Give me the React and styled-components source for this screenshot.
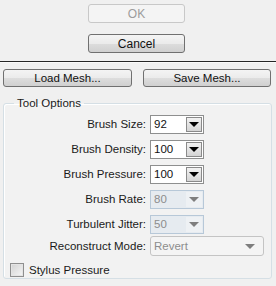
import React from "react";
import styled, { createGlobalStyle } from "styled-components";

const GlobalStyle = createGlobalStyle`
  html, body {
    margin: 0;
    padding: 0;
    background: #f0f0f0;
  }
  body {
    font-family: "Liberation Sans", Arial, sans-serif;
    font-size: 11px;
    color: #1a1a1a;
  }
`;

const Page = styled.div`
  width: 276px;
  height: 286px;
  overflow: hidden;
  background: #f0f0f0;
`;

const Top = styled.div`
  display: flex;
  flex-direction: column;
  padding: 4px 0 0 88px;
  gap: 11px;
`;

const Button = styled.div`
  box-sizing: border-box;
  width: ${(p) => p.w || 97}px;
  height: ${(p) => p.h || 19}px;
  border-radius: 3px;
  display: flex;
  align-items: center;
  justify-content: center;
  font-size: ${(p) => p.fs || 12}px;
  border: 1px solid ${(p) => (p.disabled ? "#c8c8c8" : "#707070")};
  color: ${(p) => (p.disabled ? "#9c9c9c" : "#111")};
  background: ${(p) =>
    p.disabled
      ? "#f4f4f4"
      : "linear-gradient(to bottom, #f4f4f4 0%, #ebebeb 50%, #dddddd 51%, #d0d0d0 100%)"};
`;

const Separator = styled.div`
  margin-top: 8px;
  height: 1px;
  background: #262626;
  border-bottom: 1px solid #fbfbfb;
`;

const MeshRow = styled.div`
  display: flex;
  justify-content: space-between;
  padding: 6px 5px 0 3px;
`;

const Group = styled.fieldset`
  box-sizing: border-box;
  margin: 10px 4px 0 3px;
  padding: 5px 0 0 0;
  height: 182px;
  border: 1px solid #d5dfe5;
  border-radius: 3px;
  background: #f2f2f2;
  box-shadow: inset 1px 1px 0 #ffffff;
`;

const Legend = styled.legend`
  margin-left: 10px;
  padding: 0 3px;
  font-size: 11.5px;
  color: #1a1a1a;
`;

const Rows = styled.div`
  display: flex;
  flex-direction: column;
  gap: 5px;
`;

const Row = styled.div`
  display: flex;
  align-items: center;
  height: ${(p) => p.h || 20}px;
  margin-top: ${(p) => p.mt || 0}px;
`;

const Label = styled.div`
  width: 146px;
  text-align: right;
  padding-right: 4px;
  box-sizing: border-box;
  white-space: nowrap;
  font-size: 11.5px;
`;

const Combo = styled.div`
  box-sizing: border-box;
  width: ${(p) => p.w}px;
  height: ${(p) => p.h || 19}px;
  display: flex;
  align-items: center;
  border: 1px solid ${(p) => (p.disabled ? "#b7c8d8" : "#8e8f8f")};
  border-radius: ${(p) => (p.rounded ? 3 : 0)}px;
  background: ${(p) => (p.disabled ? (p.rounded ? "#f4f4f4" : "#e6ebf0") : "#ffffff")};
  color: ${(p) => (p.disabled ? "#8d8d8d" : "#111")};
  font-size: 11.5px;
  padding-left: 3px;
  padding-right: 1px;
  ${(p) => p.rounded && "border-color: #c4c4c4;"}
`;

const ComboText = styled.span`
  flex: 1;
`;

const DropButton = styled.div`
  box-sizing: border-box;
  width: 16px;
  height: 15px;
  display: flex;
  align-items: center;
  justify-content: center;
  border: 1px solid ${(p) => (p.disabled ? "transparent" : "#8a8a8a")};
  background: ${(p) =>
    p.disabled ? "#eef1f4" : "linear-gradient(to bottom, #f2f2f2, #d4d4d4)"};
  ${(p) => p.flat && "background: transparent; margin-right: 4px;"}
`;

const Arrow = styled.div`
  width: 0;
  height: 0;
  border-left: 5px solid transparent;
  border-right: 5px solid transparent;
  border-top: 5px solid ${(p) => (p.disabled ? "#7e7e7e" : "#000")};
`;

const CheckRow = styled.div`
  display: flex;
  align-items: center;
  gap: 5px;
  padding-left: 6px;
  margin-top: 7px;
  font-size: 11.5px;
`;

const Box = styled.div`
  box-sizing: border-box;
  width: 14px;
  height: 14px;
  border: 1px solid #8f8f8f;
  background: linear-gradient(135deg, #d2d2d2, #f6f6f6);
  box-shadow: inset 0 0 0 1px #e4e4e4;
`;

const ComboBox = ({ value, w, disabled, rounded, h }) => (
  <Combo w={w} h={h} disabled={disabled} rounded={rounded}>
    <ComboText>{value}</ComboText>
    <DropButton disabled={disabled} flat={rounded}>
      <Arrow disabled={disabled} />
    </DropButton>
  </Combo>
);

const options = [
  { label: "Brush Size:", value: "92" },
  { label: "Brush Density:", value: "100" },
  { label: "Brush Pressure:", value: "100" },
  { label: "Brush Rate:", value: "80", disabled: true },
  { label: "Turbulent Jitter:", value: "50", disabled: true },
];

const App = () => {
  return (
    <Page>
      <GlobalStyle />
      <Top>
        <Button disabled>OK</Button>
        <Button>Cancel</Button>
      </Top>
      <Separator />
      <MeshRow>
        <Button w={129} h={18} fs={11.5}>Load Mesh...</Button>
        <Button w={128} h={18} fs={11.5}>Save Mesh...</Button>
      </MeshRow>
      <Group>
        <Legend>Tool Options</Legend>
        <Rows>
          {options.map((o) => (
            <Row key={o.label}>
              <Label>{o.label}</Label>
              <ComboBox value={o.value} w={54} disabled={o.disabled} />
            </Row>
          ))}
          <Row mt={-3}>
            <Label>Reconstruct Mode:</Label>
            <ComboBox value="Revert" w={114} h={20} disabled rounded />
          </Row>
        </Rows>
        <CheckRow>
          <Box />
          <span>Stylus Pressure</span>
        </CheckRow>
      </Group>
    </Page>
  );
};

export default App;
